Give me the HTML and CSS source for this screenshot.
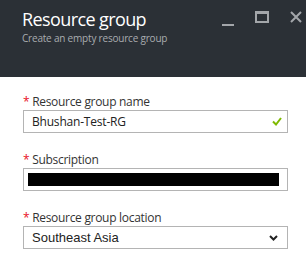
FILE: index.html
```html
<!DOCTYPE html>
<html lang="en">
<head>
    <meta charset="UTF-8">
    <title>Resource group</title>
    <link rel="stylesheet" href="styles.css">
</head>
<body>
    <div class="blade">
        <div class="blade-header">
            <div class="blade-title">
                <h1>Resource group</h1>
                <p>Create an empty resource group</p>
            </div>
            <div class="blade-controls">
                <span class="ctl ctl-min"></span>
                <span class="ctl ctl-max"></span>
                <svg class="ctl ctl-close" width="12" height="12" viewBox="0 0 12 12">
                    <path d="M1 1 L11 11 M11 1 L1 11" stroke="#a3a6aa" stroke-width="2"/>
                </svg>
            </div>
        </div>

        <div class="blade-body">
            <div class="field">
                <label><span class="req">*</span> Resource group name</label>
                <div class="input">
                    <span class="value">Bhushan-Test-RG</span>
                    <svg width="10" height="9" viewBox="0 0 10 9">
                        <path d="M1 4.5 L4 7.5 L9 1" fill="none" stroke="#7fba00" stroke-width="2"/>
                    </svg>
                </div>
            </div>

            <div class="field">
                <label><span class="req">*</span> Subscription</label>
                <div class="input">
                    <span class="redacted"></span>
                </div>
            </div>

            <div class="field">
                <label><span class="req">*</span> Resource group location</label>
                <div class="input select">
                    <span class="value">Southeast Asia</span>
                    <svg width="9" height="6" viewBox="0 0 9 6">
                        <path d="M1 1 L4.5 4.5 L8 1" fill="none" stroke="#222" stroke-width="2"/>
                    </svg>
                </div>
            </div>
        </div>
    </div>
</body>
</html>
```

FILE: styles.css
```css
* {
    margin: 0;
    padding: 0;
    box-sizing: border-box;
}

body {
    font-family: "Open Sans", "Noto Sans", sans-serif;
    background: #fff;
    color: #333;
}

.blade-header {
    height: 77px;
    background: #2b3036;
    display: flex;
    justify-content: space-between;
    padding: 6px 4px 0 22px;
}

.blade-title h1 {
    font-size: 18px;
    font-weight: 400;
    color: #fff;
    line-height: 26px;
    letter-spacing: -0.6px;
}

.blade-title p {
    font-size: 10px;
    color: #a9acb0;
    line-height: 13px;
    letter-spacing: -0.2px;
}

.blade-controls {
    display: flex;
    align-items: flex-start;
    gap: 21px;
    padding-top: 4px;
}

.ctl {
    display: block;
}

.ctl-min {
    width: 12px;
    height: 2px;
    background: #a3a6aa;
    margin-top: 14px;
}

.ctl-max {
    width: 14px;
    height: 12px;
    border: 2px solid #a3a6aa;
    border-top-width: 3px;
    margin-top: 1px;
}

.ctl-close {
    margin-top: 1px;
}

.blade-body {
    padding: 17px 18px 0 23px;
}

.field {
    margin-bottom: 19px;
}

.field label {
    display: block;
    font-size: 12px;
    line-height: 16px;
    color: #333;
    letter-spacing: -0.3px;
}

.req {
    color: #e81123;
    font-size: 12px;
}

.input {
    height: 23px;
    border: 1px solid #b4b4b4;
    display: flex;
    align-items: center;
    justify-content: space-between;
    padding: 0 5px 0 8px;
    font-size: 12px;
    letter-spacing: -0.2px;
}

.input .value {
    color: #222;
}

.select .value {
    font-family: "Liberation Sans", Arial, sans-serif;
    font-size: 13px;
    letter-spacing: 0;
}

.select svg {
    margin-right: 4px;
}

.redacted {
    flex: 1;
    height: 13px;
    background: #000;
    margin: 0 3px 0 -4px;
}
```
